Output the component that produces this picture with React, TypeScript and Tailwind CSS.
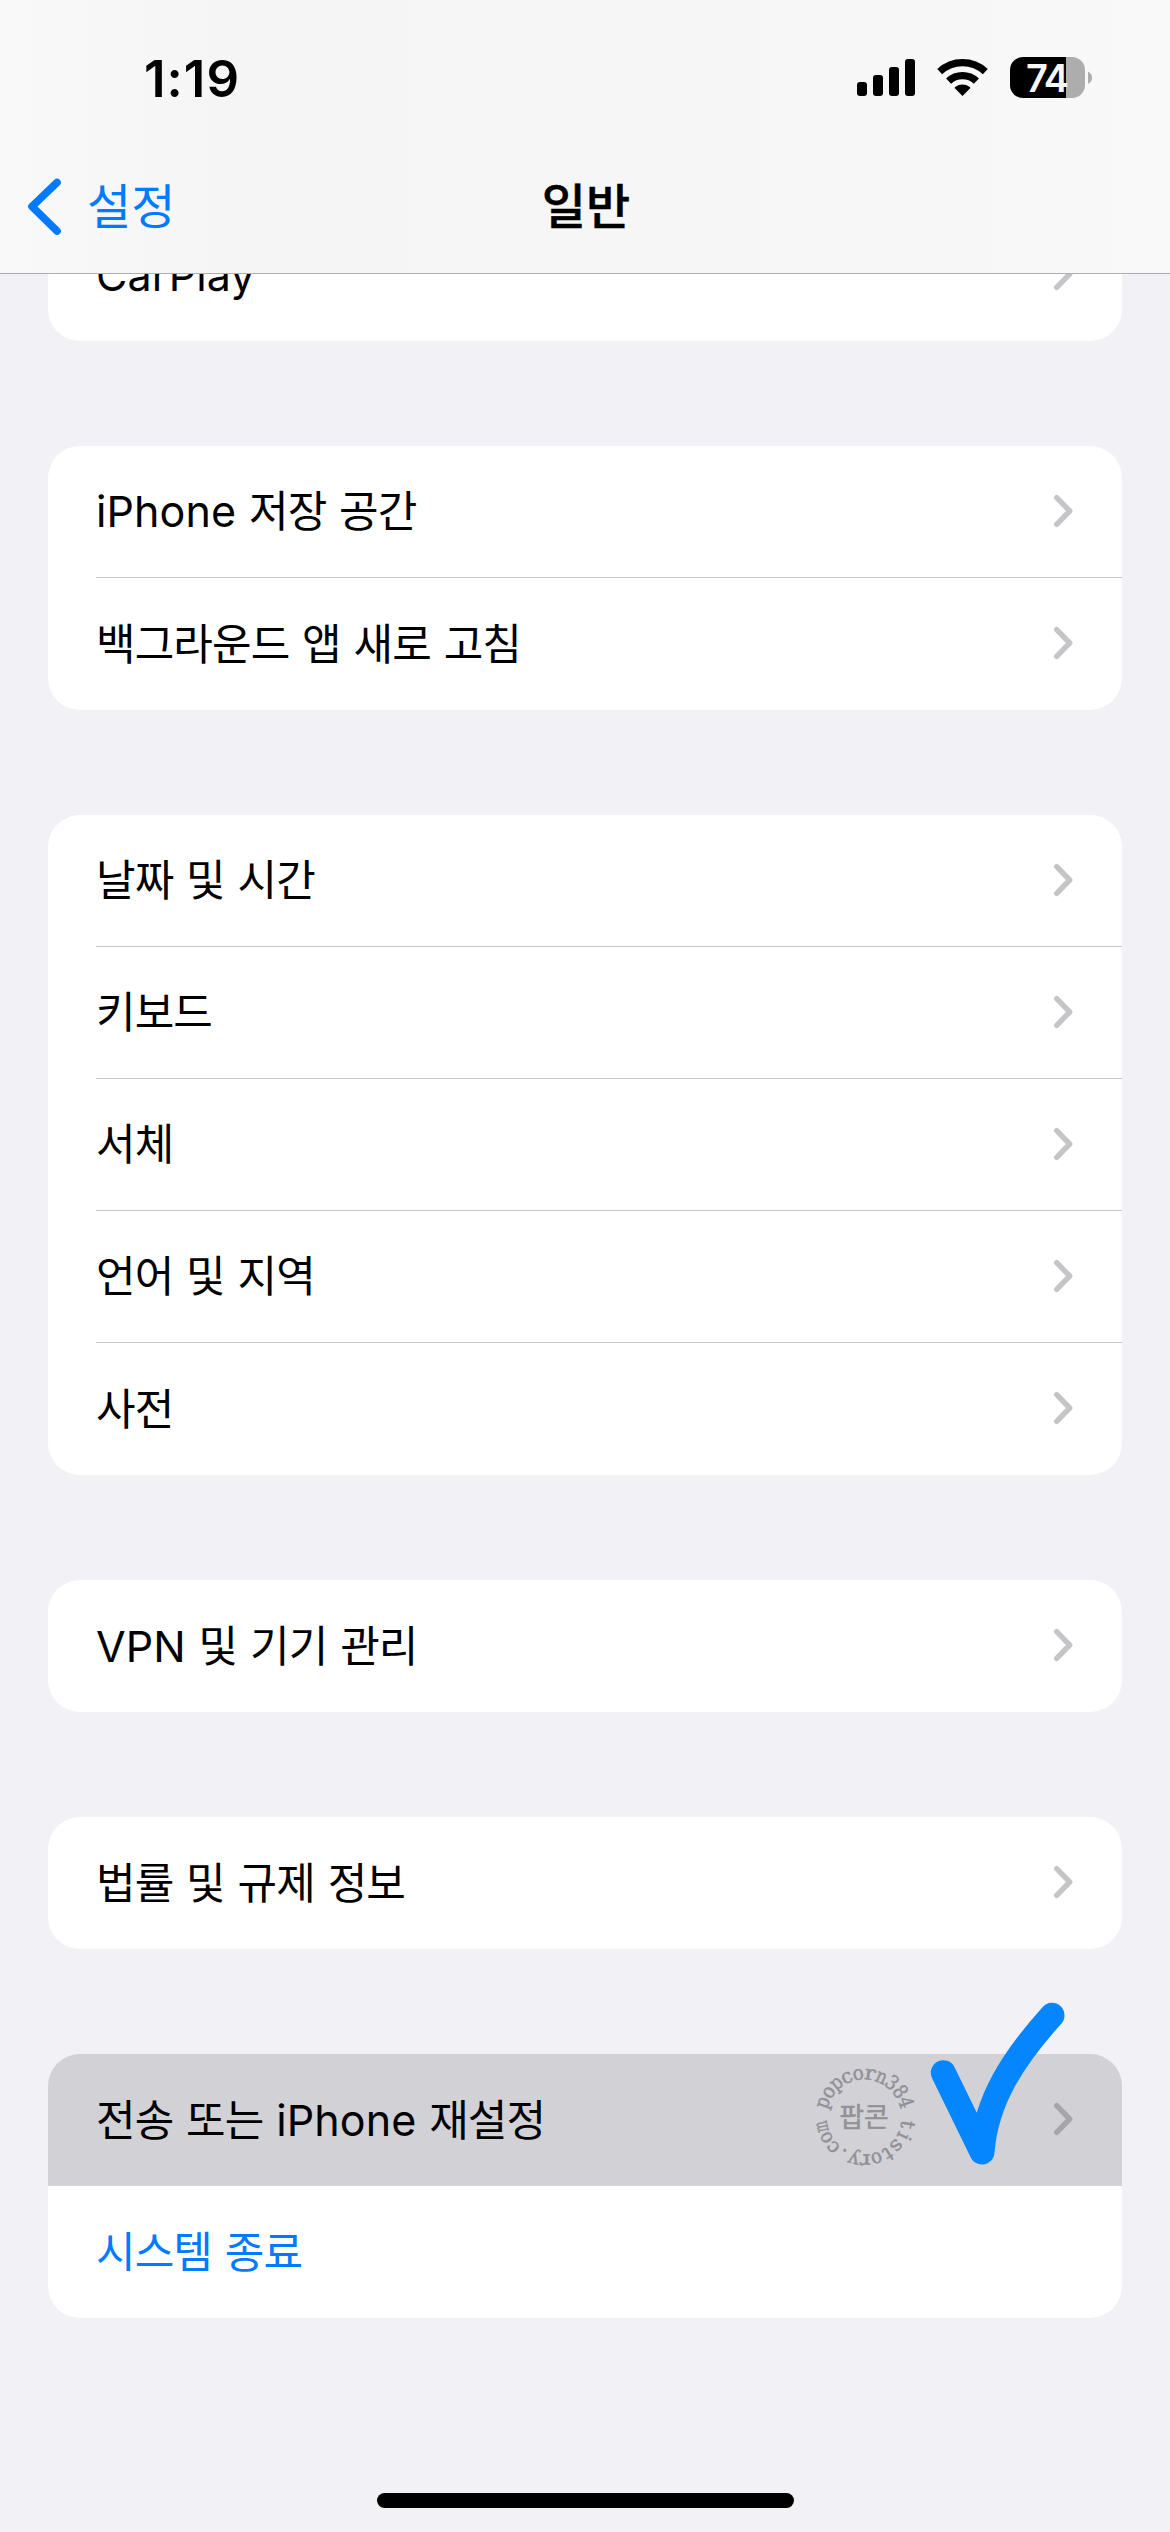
type Row = {
    label: string;
    link?: boolean;
    pressed?: boolean;
};

const groups: Row[][] = [
    [{ label: 'iPhone 저장 공간' }, { label: '백그라운드 앱 새로 고침' }],
    [
        { label: '날짜 및 시간' },
        { label: '키보드' },
        { label: '서체' },
        { label: '언어 및 지역' },
        { label: '사전' },
    ],
    [{ label: 'VPN 및 기기 관리' }],
    [{ label: '법률 및 규제 정보' }],
    [
        { label: '전송 또는 iPhone 재설정', pressed: true },
        { label: '시스템 종료', link: true },
    ],
];

const Chevron = ({ pressed = false }: { pressed?: boolean }) => (
    <svg
        width="20"
        height="34"
        viewBox="0 0 20 34"
        fill="none"
        className={`mb-[2px] shrink-0 ${pressed ? 'text-[#a5a5aa]' : 'text-[#c5c5c7]'}`}
    >
        <path d="M3.7 3.7 16.7 17 3.7 30.3" stroke="currentColor" strokeWidth="5.4" strokeLinecap="round" strokeLinejoin="round" />
    </svg>
);

// Latin words are spaced a little wider than Hangul
const Label = ({ text }: { text: string }) =>
    text.split(/([A-Za-z]+)/).map((part, i) => (
        <span key={i} className={i % 2 ? 'tracking-[0.1px]' : 'tracking-[-0.9px] [word-spacing:1.6px]'}>
            {part}
        </span>
    ));

const SettingsRow = ({ row, last }: { row: Row; last: boolean }) => (
    <div className={`h-[132px] shrink-0 pl-12 ${row.pressed ? 'bg-[#d1d1d6]' : 'bg-white'}`}>
        <div
            className={`flex h-full items-center justify-between pr-[49px] ${last || row.pressed ? '' : 'border-b border-[#c6c6c8]'}`}
        >
            <span className={`whitespace-pre text-[43px] leading-none ${row.link ? 'text-[#007aff]' : 'text-black'}`}>
                <Label text={row.label} />
            </span>
            {!row.link && <Chevron pressed={row.pressed} />}
        </div>
    </div>
);

const StatusBar = () => (
    <div className="flex h-[141px] items-start justify-between pl-[144px] pr-[78px] pt-[57px]">
        <span className="text-[51px] font-semibold leading-[43px] tracking-[1px]">1:19</span>
        <div className="flex items-start">
            <svg width="58" height="41" viewBox="0 0 58 41" className="mr-[22px]">
                <rect x="0" y="25" width="10" height="14" rx="3" />
                <rect x="16" y="18" width="10" height="21" rx="3" />
                <rect x="32" y="10" width="10" height="29" rx="3" />
                <rect x="48" y="2" width="10" height="37" rx="3" />
            </svg>
            <svg width="51" height="41" viewBox="0 0 51 41" className="mr-[22px]" fill="none">
                <path d="M2.7 14.6A33.5 33.5 0 0 1 48.3 14.6" stroke="black" strokeWidth="7.2" />
                <path d="M11.6 24.1A20.4 20.4 0 0 1 39.4 24.1" stroke="black" strokeWidth="7.4" />
                <path d="M25.5 39 17.6 31.1Q17.6 30.4 18.5 29.8A12 12 0 0 1 32.5 29.8Q33.4 30.4 33.4 31.1Z" fill="black" />
            </svg>
            <div className="flex h-[41px] w-[75px] items-center justify-center rounded-[13px] bg-[linear-gradient(90deg,#000_56px,#adadad_56px)] pr-[2px] text-[38px] font-semibold leading-none tracking-[-2px] text-[#f7f7f7]">
                74
            </div>
            <svg width="4" height="14" viewBox="0 0 4 14" className="ml-[3px] mt-[14px]">
                <path d="M0 0.5Q4 2.5 4 6.8T0 13Z" fill="#adadad" />
            </svg>
        </div>
    </div>
);

const NavBar = () => (
    <div className="grid h-[132px] grid-cols-3 items-center">
        <div className="flex items-center pl-[27px] text-[#007aff]">
            <svg width="34" height="58" viewBox="0 0 34 58" fill="none">
                <path d="M30 4.5 5 28.5 30 53" stroke="currentColor" strokeWidth="7.6" strokeLinecap="round" strokeLinejoin="round" />
            </svg>
            <span className="ml-[26px] text-[48px] leading-none">설정</span>
        </div>
        <h1 className="pl-[2px] text-center text-[48px] font-medium leading-none [-webkit-text-stroke:0.5px_black]">일반</h1>
    </div>
);

// letters sit upright on a ring, 15.7 degrees apart
const ring = [
    ...[...'popcorn384'].map((char, i) => ({ char, angle: -70.5 + i * 15.7 })),
    ...[...'tistory.com'].map((char, i) => ({ char, angle: 100 + i * 15.7 })),
];

const Stamp = () => (
    <svg
        width="130"
        height="130"
        viewBox="-65 -65 130 130"
        className="absolute left-[799px] top-[2052px] overflow-visible"
        fill="#919196"
        stroke="#919196"
        strokeWidth="0.5"
    >
        {ring.map(({ char, angle }) => (
            <text
                key={angle}
                y="-37.5"
                transform={`rotate(${angle})`}
                textAnchor="middle"
                textLength={'it.'.includes(char) ? undefined : 11}
                lengthAdjust="spacingAndGlyphs"
                className="font-['DejaVu_Serif',serif] text-[20px]"
            >
                {char}
            </text>
        ))}
        <text y="10" textAnchor="middle" className="text-[27px]">팝콘</text>
    </svg>
);

const CheckMark = () => (
    <svg width="140" height="170" viewBox="0 0 420 510" className="absolute left-[928px] top-[2000px]" fill="none">
        <path
            d="M46 218 162 456C174 300 256 175 372 46"
            stroke="#0586ff"
            strokeWidth="75"
            strokeLinecap="round"
            strokeLinejoin="round"
        />
    </svg>
);

export default function App() {
    return (
        <div className="relative flex h-[2532px] w-[1170px] flex-col overflow-hidden bg-[#f2f1f6] font-['Inter','Noto_Sans_CJK_KR',sans-serif] text-black">
            <header className="h-[274px] shrink-0 border-b border-[#aeaeb1] bg-[linear-gradient(90deg,#f9f9f9,#f5f5f5_20%,#f6f6f6_50%,#f7f7f7_80%,#f9f9f9)]">
                <StatusBar />
                <NavBar />
            </header>

            <main className="flex flex-1 flex-col gap-[105px] px-12">
                <section className="flex h-[67px] shrink-0 flex-col justify-end overflow-hidden rounded-b-[32px]">
                    <SettingsRow row={{ label: 'CarPlay' }} last />
                </section>
                {groups.map((rows) => (
                    <section key={rows[0].label} className="overflow-hidden rounded-[32px]">
                        {rows.map((row, i) => (
                            <SettingsRow key={row.label} row={row} last={i === rows.length - 1} />
                        ))}
                    </section>
                ))}
            </main>

            <div className="mb-6 h-[15px] w-[417px] self-center rounded-full bg-black" />

            <Stamp />
            <CheckMark />
        </div>
    );
}
